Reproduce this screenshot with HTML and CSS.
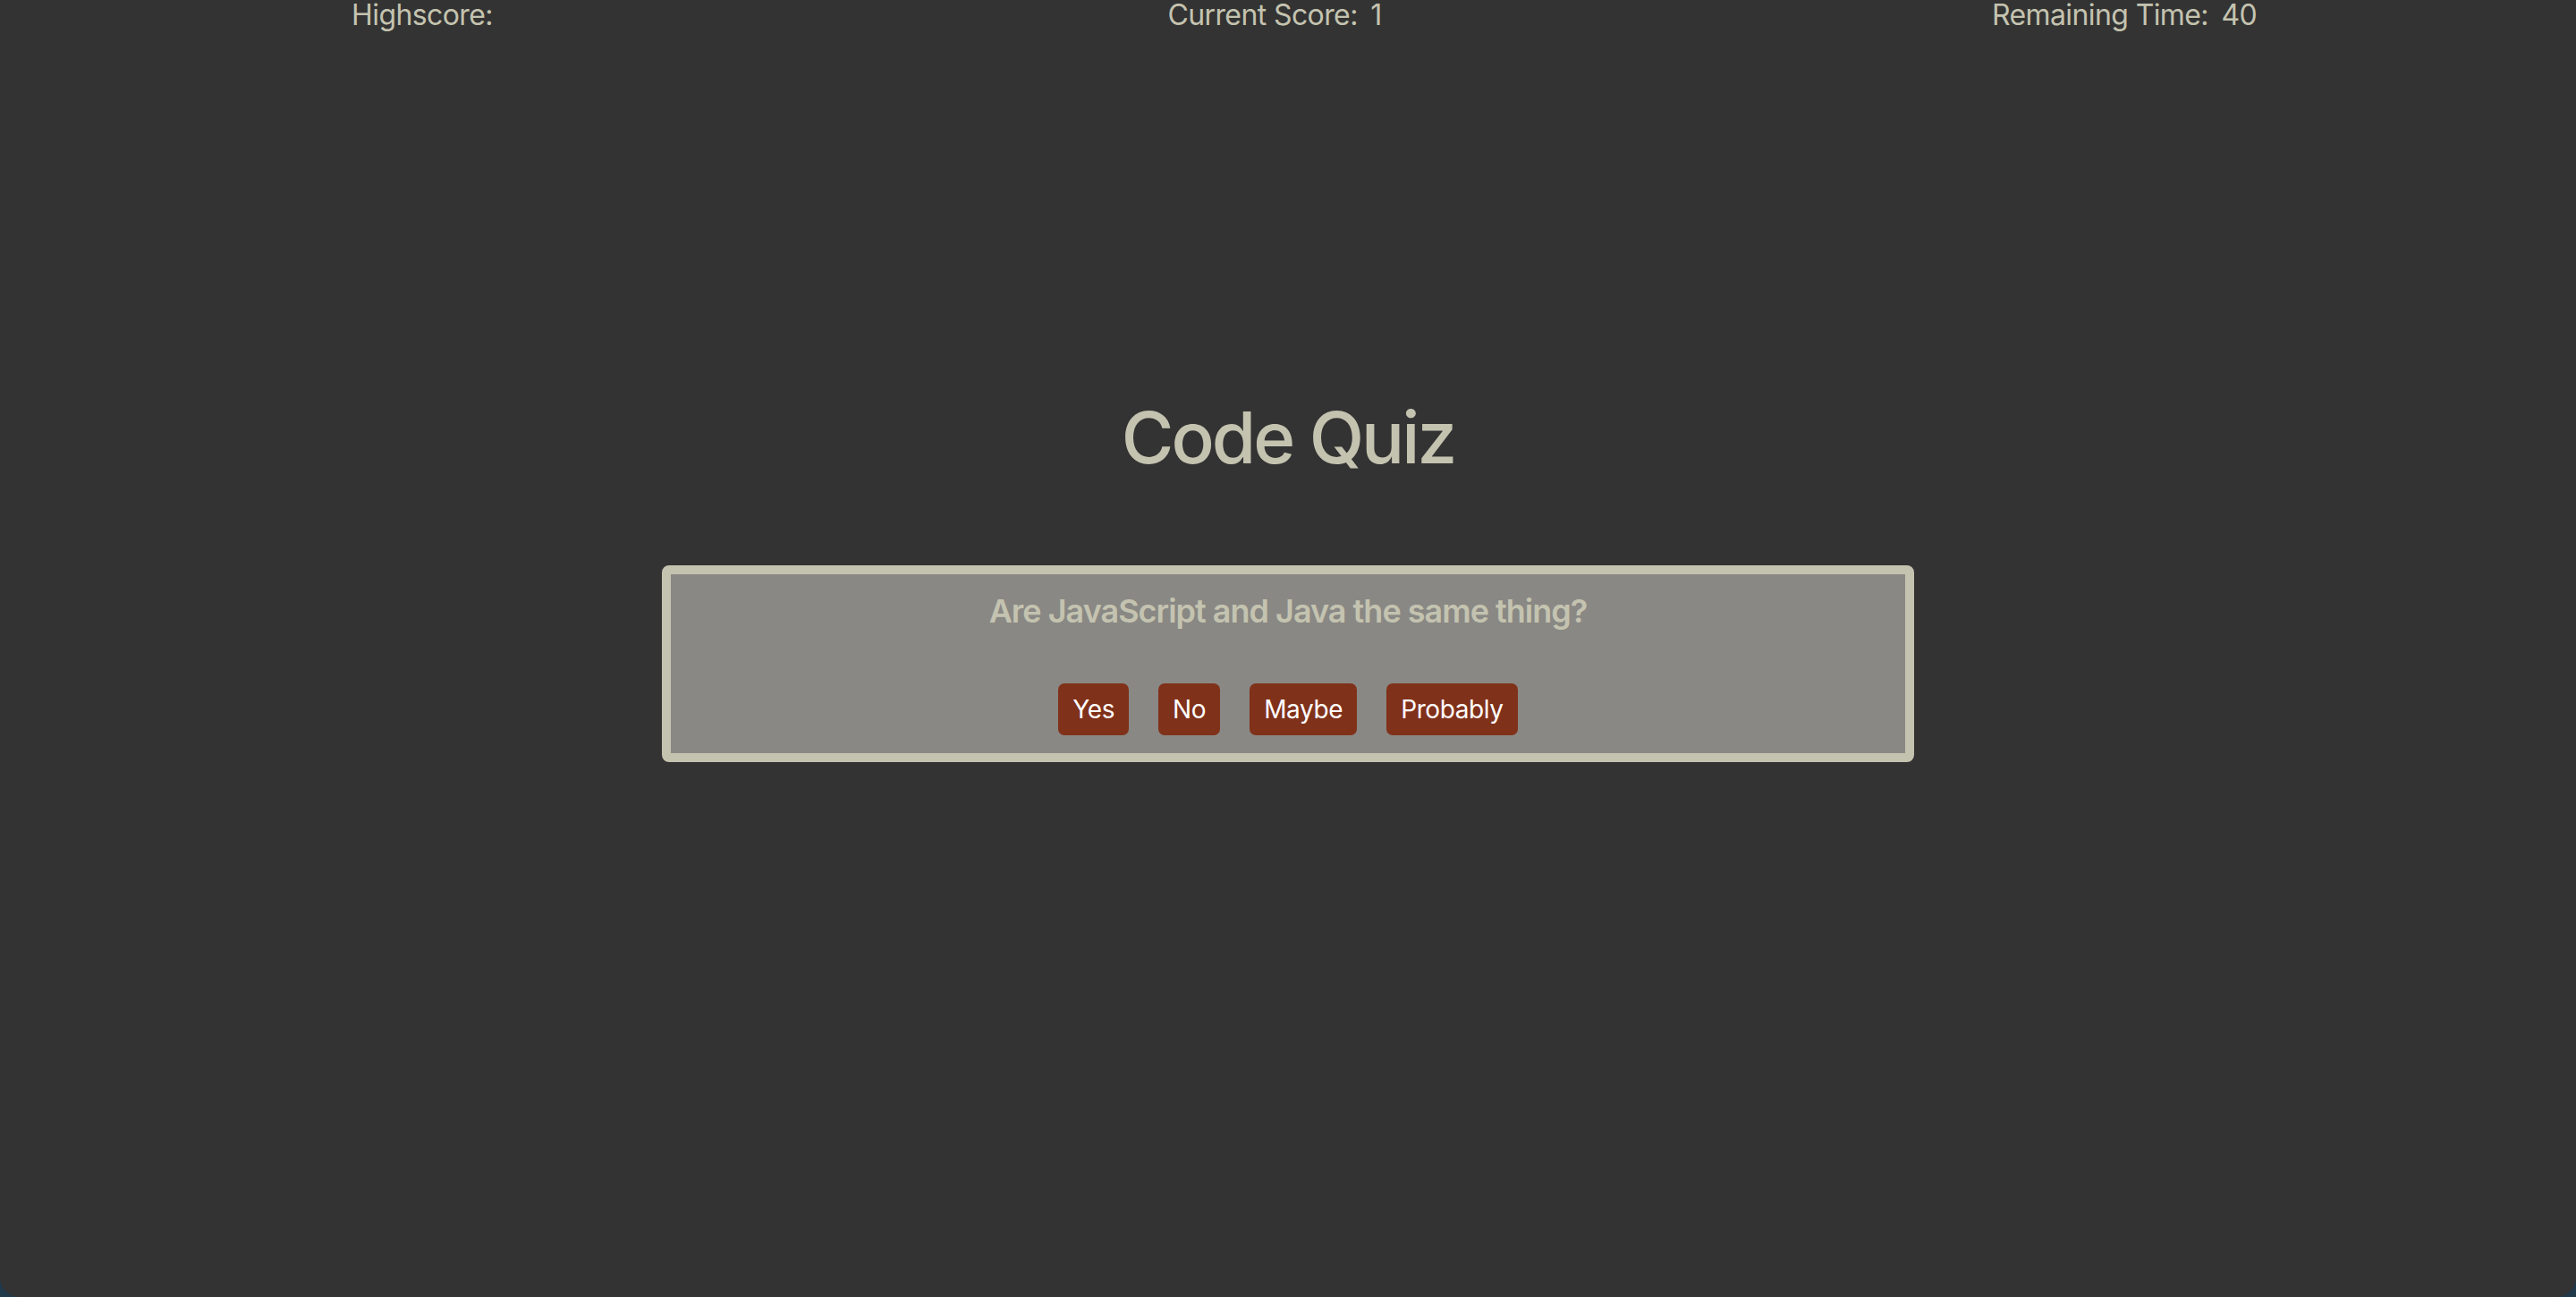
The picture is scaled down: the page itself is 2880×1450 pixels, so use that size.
FILE: index.html
```html
<!DOCTYPE html>
<html lang="en">
<head>
<meta charset="utf-8">
<title>Code Quiz</title>
<link rel="stylesheet" href="styles.css">
</head>
<body>
<header class="scorebar">
  <div class="stat">Highscore: <span class="stat-value"></span></div>
  <div class="stat">Current Score: <span class="stat-value">1</span></div>
  <div class="stat">Remaining Time: <span class="stat-value">40</span></div>
</header>
<main class="main">
  <h1 class="title">Code Quiz</h1>
  <section class="card">
    <h2 class="question">Are JavaScript and Java the same thing?</h2>
    <div class="answers">
      <button class="answer">Yes</button>
      <button class="answer">No</button>
      <button class="answer">Maybe</button>
      <button class="answer">Probably</button>
    </div>
  </section>
</main>
</body>
</html>
```

FILE: styles.css
```css
html {
  background: #22394a;
}
body {
  margin: 0;
  min-height: 1450px;
  background: #333333;
  border-radius: 0 0 22px 22px;
  font-family: Inter, "Noto Sans", "Liberation Sans", sans-serif;
  color: #c4c3b0;
}
.scorebar {
  display: grid;
  grid-template-columns: 950px 950px 950px;
  font-size: 32px;
  line-height: 34px;
  letter-spacing: -0.6px;
  text-align: center;
}
.stat-value {
  margin-left: 6px;
}
.main {
  display: flex;
  flex-direction: column;
  align-items: center;
}
.title {
  margin: 407px 0 0;
  font-size: 80px;
  line-height: 96px;
  font-weight: 500;
  letter-spacing: -3px;
}
.card {
  box-sizing: border-box;
  width: 1400px;
  margin-top: 95px;
  border: 10px solid #c4c3b0;
  border-radius: 8px;
  background: #898884;
  padding: 19px 0 20px;
  display: flex;
  flex-direction: column;
  align-items: center;
}
.question {
  margin: 0;
  font-size: 36px;
  line-height: 44px;
  font-weight: 600;
  letter-spacing: -1px;
}
.answers {
  display: flex;
  gap: 33px;
  margin-top: 59px;
}
.answer {
  font-family: inherit;
  font-size: 28px;
  line-height: 34px;
  letter-spacing: -0.4px;
  padding: 12px 16px;
  border: none;
  border-radius: 7px;
  background: #80311a;
  color: #ffffff;
}
```
